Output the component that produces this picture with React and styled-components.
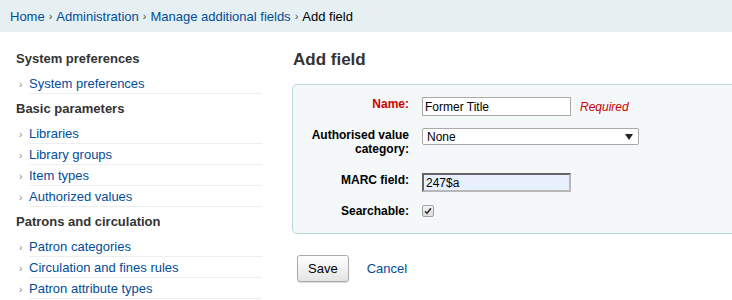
import styled, { createGlobalStyle } from "styled-components";

const GlobalStyle = createGlobalStyle`
	html, body {
		margin: 0;
		padding: 0;
		background: #fff;
		overflow: hidden;
	}
	body {
		font-family: "Liberation Sans", Arial, sans-serif;
		font-size: 13px;
		color: #000;
	}
`;

const Breadcrumbs = styled.div`
	height: 32px;
	background: #e6f0f2;
	padding: 0 10px;
	display: flex;
	align-items: center;
	font-size: 13px;
	line-height: 15px;
	color: #000;
	white-space: nowrap;

	a {
		color: #004d99;
		text-decoration: none;
	}

	.sep {
		color: #444;
		margin: 0 4px;
		font-size: 11px;
	}
`;

const Layout = styled.div`
	display: flex;
	align-items: flex-start;
	padding-top: 12px;
`;

const Sidebar = styled.nav`
	width: 246px;
	flex: none;
	padding-left: 16px;
`;

const NavHeading = styled.h5`
	margin: 0;
	padding: 7px 0;
	font-size: 13px;
	line-height: 15px;
	font-weight: bold;
	color: #333;
`;

const NavList = styled.ul`
	list-style: none;
	margin: 0;
	padding: 0;
`;

const NavItem = styled.li`
	display: flex;
	align-items: flex-start;
	height: 21px;
`;

const Arrow = styled.span`
	width: 13px;
	flex: none;
	padding: 2px 0 0 3px;
	box-sizing: border-box;
	font-size: 10px;
	line-height: 19px;
	color: #888;
`;

const NavLink = styled.a`
	flex: 1;
	display: block;
	padding: 3px 0 2px;
	line-height: 15px;
	font-size: 13px;
	color: #004d99;
	text-decoration: none;
	border-bottom: 1px solid #eee;
`;

const Main = styled.main`
	flex: none;
	width: 460px;
	margin-left: 30px;
	padding-top: 6px;
`;

const Title = styled.h1`
	margin: 0 0 14px 1px;
	font-size: 17px;
	line-height: 20px;
	font-weight: bold;
	color: #333;
`;

const Fieldset = styled.fieldset`
	margin: 0;
	padding: 12px 0 15px 8px;
	background: #f4f8f9;
	border: 1px solid #b9d8d9;
	border-radius: 5px;
	display: flex;
	flex-direction: column;
	gap: 12px;
	min-width: 0;
`;

const Row = styled.div`
	display: grid;
	grid-template-columns: 108px auto;
	column-gap: 13px;
	align-items: start;
	justify-content: start;
`;

const Label = styled.label`
	text-align: right;
	font-size: 12px;
	line-height: 14px;
	font-weight: bold;
	color: ${(p) => (p.$required ? "#cc0000" : "#000")};
	padding-bottom: ${(p) => (p.$wrap ? "5px" : "0")};
`;

const Field = styled.div`
	display: flex;
	align-items: center;
	gap: 9px;
`;

const TextInput = styled.input`
	box-sizing: border-box;
	width: 149px;
	height: 19px;
	margin: 0;
	padding: 0 2px;
	font-family: "Liberation Sans", Arial, sans-serif;
	font-size: 12px;
	color: #000;
	background: ${(p) => (p.$autofill ? "#e8f0fe" : "#fff")};
	border: ${(p) =>
		p.$autofill ? "2px inset #b8b8b8" : "1px solid #a9a9a9"};
	outline: none;
`;

const Hint = styled.span`
	font-size: 12px;
	font-style: italic;
	color: #cc0000;
`;

const SelectBox = styled.div`
	box-sizing: border-box;
	width: 217px;
	height: 17px;
	display: flex;
	align-items: center;
	justify-content: space-between;
	padding: 0 5px 0 4px;
	background: #fff;
	border: 1px solid #a9a9a9;
	border-radius: 2px;
	font-size: 12px;
	color: #000;
`;

const CheckBox = styled.span`
	box-sizing: border-box;
	width: 12px;
	height: 12px;
	margin-top: 1px;
	display: flex;
	align-items: center;
	justify-content: center;
	border: 1px solid #a0a0a0;
	border-radius: 2px;
	background: linear-gradient(#f4f4f4, #dedede);
`;

const Actions = styled.div`
	display: flex;
	align-items: center;
	gap: 18px;
	margin: 21px 0 0 5px;
`;

const Button = styled.button`
	height: 27px;
	padding: 0 10px;
	font-family: "Liberation Sans", Arial, sans-serif;
	font-size: 13px;
	color: #000;
	border: 1px solid #aaa;
	border-radius: 3px;
	background: linear-gradient(#ffffff, #e4e4e4);
	box-shadow: 0 1px 1px rgba(0, 0, 0, 0.15);
`;

const CancelLink = styled.a`
	font-size: 13px;
	color: #004d99;
	text-decoration: none;
`;

const nav = [
	{ heading: "System preferences", links: ["System preferences"] },
	{
		heading: "Basic parameters",
		links: ["Libraries", "Library groups", "Item types", "Authorized values"],
	},
	{
		heading: "Patrons and circulation",
		links: [
			"Patron categories",
			"Circulation and fines rules",
			"Patron attribute types",
		],
	},
];

export default function App() {
	return (
		<>
			<GlobalStyle />
			<Breadcrumbs>
				<a href="#">Home</a>
				<span className="sep">›</span>
				<a href="#">Administration</a>
				<span className="sep">›</span>
				<a href="#">Manage additional fields</a>
				<span className="sep">›</span>
				Add field
			</Breadcrumbs>
			<Layout>
				<Sidebar>
					{nav.map((group) => (
						<div key={group.heading}>
							<NavHeading>{group.heading}</NavHeading>
							<NavList>
								{group.links.map((link) => (
									<NavItem key={link}>
										<Arrow>›</Arrow>
										<NavLink href="#">{link}</NavLink>
									</NavItem>
								))}
							</NavList>
						</div>
					))}
				</Sidebar>
				<Main>
					<Title>Add field</Title>
					<Fieldset>
						<Row>
							<Label $required>Name:</Label>
							<Field>
								<TextInput defaultValue="Former Title" />
								<Hint>Required</Hint>
							</Field>
						</Row>
						<Row>
							<Label $wrap>
								Authorised value
								<br />
								category:
							</Label>
							<SelectBox>
								<span>None</span>
								<svg width="8" height="6" viewBox="0 0 8 6">
									<path d="M0 0h8L4 6z" fill="#222" />
								</svg>
							</SelectBox>
						</Row>
						<Row>
							<Label>MARC field:</Label>
							<TextInput $autofill defaultValue="247$a" />
						</Row>
						<Row>
							<Label>Searchable:</Label>
							<CheckBox>
								<svg width="8" height="8" viewBox="0 0 8 8">
									<path
										d="M1 4.2 3 6.3 7 1.2"
										fill="none"
										stroke="#333"
										strokeWidth="1.6"
									/>
								</svg>
							</CheckBox>
						</Row>
					</Fieldset>
					<Actions>
						<Button>Save</Button>
						<CancelLink href="#">Cancel</CancelLink>
					</Actions>
				</Main>
			</Layout>
		</>
	);
}
